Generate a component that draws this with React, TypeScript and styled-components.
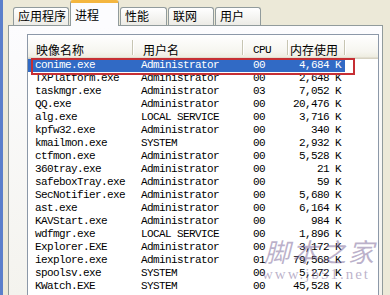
import React from 'react';
import styled, { createGlobalStyle, css } from 'styled-components';

const GlobalStyle = createGlobalStyle`
  html, body {
    margin: 0;
    padding: 0;
    background: #ece9d8;
    overflow: hidden;
  }
`;

const CJK = `'Noto Sans CJK SC', 'Noto Sans', sans-serif`;
const MONO = `'Liberation Mono', 'DejaVu Sans Mono', 'Noto Sans CJK SC', monospace`;

type Align = 'left' | 'right';

type Column = {
  key: 'name' | 'user' | 'cpu' | 'mem';
  title: string;
  width: number;
  align: Align;
  pad: number;
  headPad: number;
  mono?: boolean;
};

const columns: Column[] = [
  { key: 'name', title: '映像名称', width: 105, align: 'left', pad: 7, headPad: 8 },
  { key: 'user', title: '用户名', width: 110, align: 'left', pad: 8, headPad: 10 },
  { key: 'cpu', title: 'CPU', width: 45, align: 'left', pad: 10, headPad: 10, mono: true },
  { key: 'mem', title: '内存使用', width: 57, align: 'right', pad: 4, headPad: 7 },
];

type Proc = { name: string; user: string; cpu: string; mem: string };

const processes: Proc[] = [
  { name: 'conime.exe', user: 'Administrator', cpu: '00', mem: '4,684 K' },
  { name: 'TXPlatform.exe', user: 'Administrator', cpu: '00', mem: '2,648 K' },
  { name: 'taskmgr.exe', user: 'Administrator', cpu: '03', mem: '7,052 K' },
  { name: 'QQ.exe', user: 'Administrator', cpu: '00', mem: '20,476 K' },
  { name: 'alg.exe', user: 'LOCAL SERVICE', cpu: '00', mem: '3,716 K' },
  { name: 'kpfw32.exe', user: 'Administrator', cpu: '00', mem: '340 K' },
  { name: 'kmailmon.exe', user: 'SYSTEM', cpu: '00', mem: '2,932 K' },
  { name: 'ctfmon.exe', user: 'Administrator', cpu: '00', mem: '5,528 K' },
  { name: '360tray.exe', user: 'Administrator', cpu: '00', mem: '21 K' },
  { name: 'safeboxTray.exe', user: 'Administrator', cpu: '00', mem: '59 K' },
  { name: 'SecNotifier.exe', user: 'Administrator', cpu: '00', mem: '5,680 K' },
  { name: 'ast.exe', user: 'Administrator', cpu: '00', mem: '6,164 K' },
  { name: 'KAVStart.exe', user: 'Administrator', cpu: '00', mem: '984 K' },
  { name: 'wdfmgr.exe', user: 'LOCAL SERVICE', cpu: '00', mem: '1,896 K' },
  { name: 'Explorer.EXE', user: 'Administrator', cpu: '00', mem: '3,172 K' },
  { name: 'iexplore.exe', user: 'Administrator', cpu: '01', mem: '79,568 K' },
  { name: 'spoolsv.exe', user: 'SYSTEM', cpu: '00', mem: '5,272 K' },
  { name: 'KWatch.EXE', user: 'SYSTEM', cpu: '00', mem: '45,528 K' },
];

const tabs = [
  { label: '应用程序', width: 56 },
  { label: '进程', width: 49, active: true },
  { label: '性能', width: 47 },
  { label: '联网', width: 46 },
  { label: '用户', width: 46 },
];

const Window = styled.div`
  width: 390px;
  height: 295px;
  display: flex;
  position: relative;
  background: #ece9d8;
  border-left: 3px solid #5b7fcb;
  box-sizing: border-box;
  overflow: hidden;
`;

const Main = styled.div`
  flex: 1;
  display: flex;
  flex-direction: column;
  margin: 0 7px 0 5px;
  min-width: 0;
`;

const TabStrip = styled.div`
  display: flex;
  align-items: flex-end;
  height: 25px;
  padding-left: 5px;
  position: relative;
  z-index: 1;
`;

const Tab = styled.div<{ $width: number; $active?: boolean }>`
  box-sizing: border-box;
  width: ${({ $width }) => $width}px;
  height: 18px;
  margin-left: 1px;
  padding-left: 4px;
  border: 1px solid #919b9c;
  border-bottom: none;
  border-radius: 3px 3px 0 0;
  background: linear-gradient(#ffffff, #ecebe6);
  font-family: ${CJK};
  font-size: 12px;
  line-height: 16px;
  color: #000;
  white-space: nowrap;

  &:first-child {
    margin-left: 0;
  }

  ${({ $active }) =>
    $active &&
    css`
      height: 26px;
      margin-bottom: -1px;
      padding-top: 4px;
      border-top: 3px solid #f4b63f;
      background: #fcfcfe;
    `}
`;

const Pane = styled.div`
  flex: 1;
  display: flex;
  flex-direction: column;
  padding: 8px 3px 0 18px;
  border: 1px solid #919b9c;
  border-bottom: none;
  background: linear-gradient(#fcfcfe, #f4f3ee);
  min-height: 0;
`;

const ListView = styled.div`
  flex: 1;
  display: flex;
  flex-direction: column;
  background: #fff;
  border: 1px solid #8c98a8;
  border-bottom: none;
  position: relative;
  overflow: hidden;
`;

const Header = styled.div`
  display: flex;
  height: 24px;
  flex-shrink: 0;
  background: linear-gradient(#ffffff, #f6f5ef 70%, #ebeadb);
  box-shadow: inset 0 -1px 0 #d6d2c2, inset 0 -2px 0 #e2ded1;
`;

const HeaderCell = styled.div<{ $width: number; $align: Align; $pad: number; $mono?: boolean }>`
  box-sizing: border-box;
  width: ${({ $width }) => $width}px;
  position: relative;
  display: flex;
  align-items: center;
  justify-content: ${({ $align }) => ($align === 'right' ? 'flex-end' : 'flex-start')};
  padding-top: 5px;
  ${({ $align, $pad }) => ($align === 'right' ? `padding-right: ${$pad}px;` : `padding-left: ${$pad}px;`)}
  font-family: ${({ $mono }) => ($mono ? MONO : CJK)};
  font-size: ${({ $mono }) => ($mono ? '11px' : '12px')};
  letter-spacing: ${({ $mono }) => ($mono ? '-0.6px' : '0')};
  color: #000;

  &::after {
    content: '';
    position: absolute;
    right: 0;
    top: 5px;
    bottom: 4px;
    width: 1px;
    background: #c7c5b2;
    box-shadow: 1px 0 0 #ffffff;
  }
`;

const HeaderFill = styled.div`
  flex: 1;
`;

const Body = styled.div`
  display: flex;
  flex-direction: column;
  position: relative;
`;

const Row = styled.div<{ $selected?: boolean }>`
  display: flex;
  height: 13px;
  width: 317px;
  color: ${({ $selected }) => ($selected ? '#fff' : '#000')};
  background: ${({ $selected }) => ($selected ? '#316ac5' : 'transparent')};
`;

const Cell = styled.div<{ $width: number; $align: Align; $pad: number }>`
  box-sizing: border-box;
  width: ${({ $width }) => $width}px;
  text-align: ${({ $align }) => $align};
  ${({ $align, $pad }) => ($align === 'right' ? `padding-right: ${$pad}px;` : `padding-left: ${$pad}px;`)}
  font-family: ${MONO};
  font-size: 11px;
  letter-spacing: -0.6px;
  line-height: 13px;
  white-space: nowrap;
  overflow: hidden;
`;

/* red annotation box drawn over the first row */
const Marker = styled.div`
  position: absolute;
  left: 3px;
  top: -1px;
  width: 324px;
  height: 17px;
  box-sizing: border-box;
  border: 2px solid #c62f34;
  pointer-events: none;
`;

/* site watermark stamped over the lower right corner */
const Watermark = styled.div`
  position: absolute;
  left: 259px;
  top: 236px;
  display: flex;
  flex-direction: column;
  align-items: flex-start;
  pointer-events: none;
  color: rgba(120, 100, 150, 0.5);
`;

const WatermarkTitle = styled.div`
  font-family: ${CJK};
  font-size: 26px;
  font-style: italic;
  letter-spacing: 2px;
  line-height: 30px;
  padding-left: 2px;
`;

const WatermarkUrl = styled.div`
  font-family: 'Liberation Serif', serif;
  font-size: 15px;
  letter-spacing: 2px;
  line-height: 16px;
`;

export default function App() {
  return (
    <>
      <GlobalStyle />
      <Window>
        <Main>
          <TabStrip>
            {tabs.map((t) => (
              <Tab key={t.label} $width={t.width} $active={t.active}>
                {t.label}
              </Tab>
            ))}
          </TabStrip>
          <Pane>
            <ListView>
              <Header>
                {columns.map((c) => (
                  <HeaderCell key={c.key} $width={c.width} $align={c.align} $pad={c.headPad} $mono={c.mono}>
                    {c.title}
                  </HeaderCell>
                ))}
                <HeaderFill />
              </Header>
              <Body>
                {processes.map((p, i) => (
                  <Row key={p.name} $selected={i === 0}>
                    {columns.map((c) => (
                      <Cell key={c.key} $width={c.width} $align={c.align} $pad={c.pad}>
                        {p[c.key]}
                      </Cell>
                    ))}
                  </Row>
                ))}
                <Marker />
              </Body>
            </ListView>
          </Pane>
        </Main>
        <Watermark>
          <WatermarkTitle>脚本之家</WatermarkTitle>
          <WatermarkUrl>www.jb51.net</WatermarkUrl>
        </Watermark>
      </Window>
    </>
  );
}
